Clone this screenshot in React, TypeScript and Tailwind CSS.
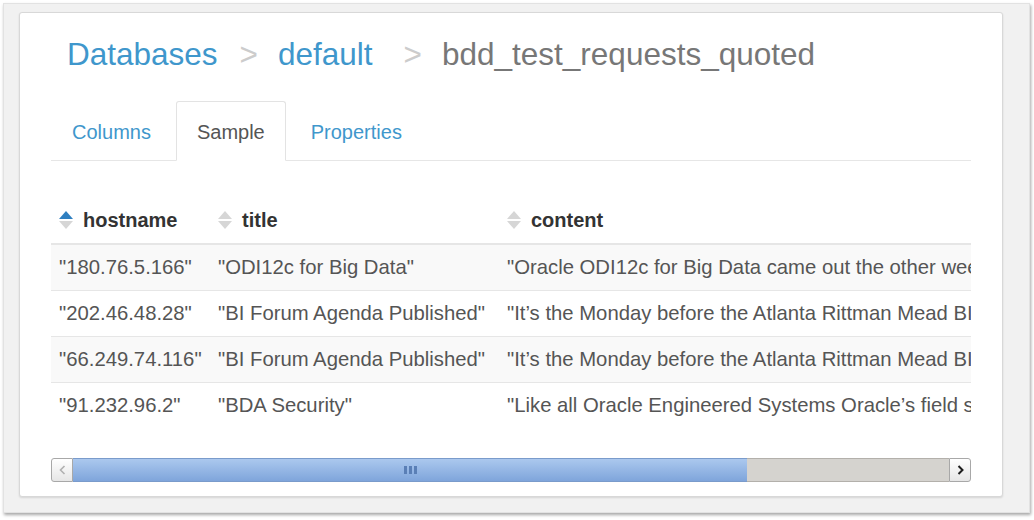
import React from 'react';

const rows = [
  {
    host: '"180.76.5.166"',
    title: '"ODI12c for Big Data"',
    content: '"Oracle ODI12c for Big Data came out the other week, and as I\u2019ve been using it for a while now"',
  },
  {
    host: '"202.46.48.28"',
    title: '"BI Forum Agenda Published"',
    content: '"It\u2019s the Monday before the Atlanta Rittman Mead BI Forum 2015, and the agenda is now out"',
  },
  {
    host: '"66.249.74.116"',
    title: '"BI Forum Agenda Published"',
    content: '"It\u2019s the Monday before the Atlanta Rittman Mead BI Forum 2015, and the agenda is now out"',
  },
  {
    host: '"91.232.96.2"',
    title: '"BDA Security"',
    content: '"Like all Oracle Engineered Systems Oracle\u2019s field staff install and configure the appliance"',
  },
];

function SortIcon({ active }: { active?: boolean }) {
  return (
    <svg width="14" height="18" viewBox="0 0 14 18" className="shrink-0">
      <polygon points="7,0 14,8 0,8" fill={active ? '#2f7fc0' : '#d6d6d6'} />
      <polygon points="0,10 14,10 7,18" fill="#d6d6d6" />
    </svg>
  );
}

function Th({ label, active, width }: { label: string; active?: boolean; width?: string }) {
  return (
    <th className={`${width ?? ''} px-2 pt-[12px] pb-[9px] text-left font-bold text-[20px] leading-[24px] text-[#333] border-b-2 border-[#e6e6e6] whitespace-nowrap`}>
      <span className="inline-flex items-center gap-[10px]">
        <SortIcon active={active} />
        {label}
      </span>
    </th>
  );
}

function Scrollbar() {
  return (
    <div className="mt-[30px] flex h-[24px] w-[920px]">
      <div className="flex w-[22px] items-center justify-center rounded-l-[3px] border border-[#a8a8a8] bg-gradient-to-b from-white to-[#e6e6e6]">
        <svg width="7" height="10" viewBox="0 0 7 10">
          <path d="M5.5 1 L1.5 5 L5.5 9" fill="none" stroke="#b0b0b0" strokeWidth="1.6" />
        </svg>
      </div>
      <div className="flex w-[674px] items-center justify-center border-y border-[#7a9bcb] bg-gradient-to-b from-[#abc8ee] to-[#7fa5db]">
        <div className="flex gap-[2px]">
          <span className="h-[8px] w-[3px] bg-[#5a7fb6]" />
          <span className="h-[8px] w-[3px] bg-[#5a7fb6]" />
          <span className="h-[8px] w-[3px] bg-[#5a7fb6]" />
        </div>
      </div>
      <div className="flex-1 border-y border-[#b3b0ab] bg-[#d5d3cf]" />
      <div className="flex w-[22px] items-center justify-center rounded-r-[3px] border border-[#a8a8a8] bg-gradient-to-b from-white to-[#e6e6e6]">
        <svg width="7" height="10" viewBox="0 0 7 10">
          <path d="M1.5 1 L5.5 5 L1.5 9" fill="none" stroke="#1e1e1e" strokeWidth="2" />
        </svg>
      </div>
    </div>
  );
}

export default function App() {
  return (
    <div className="h-[520px] w-[1034px] overflow-hidden bg-white pl-[3px] pt-[3px] font-['Liberation_Sans',Arial,sans-serif]">
      <div className="h-[510px] w-[1027px] border border-[#e2e2e2] bg-[#f1f1f1] pl-[15px] pt-[8px] shadow-[1px_2px_3px_rgba(0,0,0,0.35)]">
        <div className="h-[485px] w-[984px] rounded-[3px] border border-[#d8d8d8] bg-white px-[31px] pt-[21px] shadow-[0_1px_2px_rgba(0,0,0,0.12)]">
          {/* breadcrumb */}
          <div className="flex h-[40px] items-center pl-[16px] text-[31.5px] leading-[40px] whitespace-nowrap">
            <span className="text-[#3f97cc]">Databases</span>
            <span className="ml-[22px] text-[#cccccc]">&gt;</span>
            <span className="ml-[20px] text-[#3f97cc]">default</span>
            <span className="ml-[31px] text-[#cccccc]">&gt;</span>
            <span className="ml-[20px] text-[#777777]">bdd_test_requests_quoted</span>
          </div>

          {/* tabs */}
          <ul className="mt-[27px] flex gap-1 border-b border-[#e6e6e6] text-[20px] leading-[24px]">
            <li className="-mb-px border border-transparent px-5 pt-[18px] pb-[16px] text-[#3f97cc]">Columns</li>
            <li className="-mb-px rounded-t-[3px] border border-[#e3e3e3] border-b-white bg-white px-5 pt-[18px] pb-[16px] text-[#555]">
              Sample
            </li>
            <li className="-mb-px border border-transparent px-5 pt-[18px] pb-[16px] text-[#3f97cc]">Properties</li>
          </ul>

          {/* sample table */}
          <div className="mt-[35px] w-[920px] overflow-hidden">
            <table className="border-collapse">
              <thead>
                <tr>
                  <Th label="hostname" active width="w-[159px] min-w-[159px]" />
                  <Th label="title" width="w-[289px] min-w-[289px]" />
                  <Th label="content" />
                </tr>
              </thead>
              <tbody>
                {rows.map((r, i) => (
                  <tr key={i} className={i % 2 === 0 ? 'bg-[#f9f9f9]' : 'bg-white'}>
                    {[r.host, r.title, r.content].map((c, j) => (
                      <td
                        key={j}
                        className="whitespace-nowrap border-t border-[#e6e6e6] px-2 pt-[10px] pb-[11px] text-[20.3px] leading-[24px] text-[#555]"
                      >
                        {c}
                      </td>
                    ))}
                  </tr>
                ))}
              </tbody>
            </table>
          </div>

          <Scrollbar />
        </div>
      </div>
    </div>
  );
}
